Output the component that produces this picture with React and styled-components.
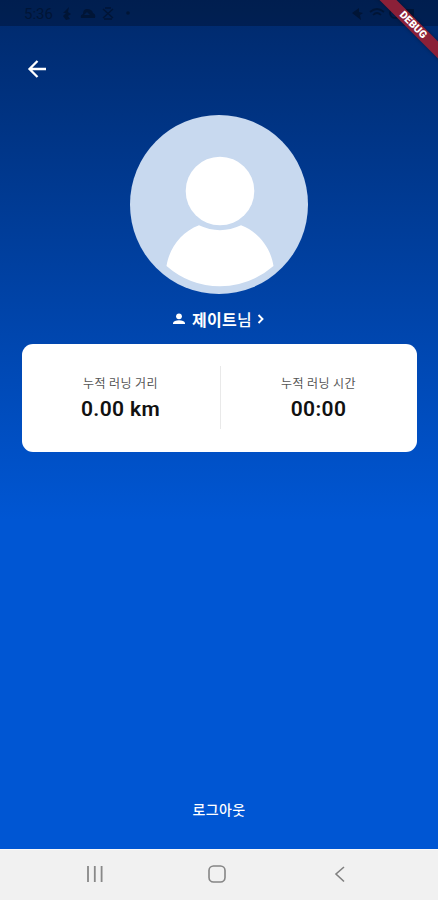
import React from "react";
import styled, { createGlobalStyle } from "styled-components";

const GlobalStyle = createGlobalStyle`
  * { box-sizing: border-box; }
  body {
    margin: 0;
    font-family: Roboto, "Noto Sans CJK KR", sans-serif;
  }
  svg { display: block; }
`;

const Screen = styled.div`
  position: relative;
  display: flex;
  flex-direction: column;
  width: 438px;
  height: 900px;
  overflow: hidden;
  color: #fff;
  background: linear-gradient(#00296b 0, #0056d3 520px);
`;

const StatusBar = styled.div`
  display: flex;
  flex: none;
  justify-content: space-between;
  height: 26px;
  padding: 2px 22px 0 24px;
  background: rgba(0, 0, 0, 0.26);
  color: #001536;
`;

const StatusGroup = styled.div`
  display: flex;
  align-items: center;
  gap: 2px;
`;

const Clock = styled.span`
  width: 31px;
  font-size: 15px;
  line-height: 20px;
`;

const Banner = styled.div`
  position: absolute;
  top: 19px;
  left: 363px;
  width: 100px;
  height: 12px;
  transform: rotate(45deg);
  background: #8b2038;
  box-shadow: 0 0 4px rgba(0, 0, 0, 0.35);
  color: #fff;
  font: 900 10.5px/12px Roboto, sans-serif;
  text-align: center;
`;

const Button = styled.button`
  border: 0;
  padding: 0;
  background: none;
  color: inherit;
`;

const Header = styled.header`
  flex: none;
  height: 89px;
  padding: 32px 0 0 26px;
`;

const Profile = styled.section`
  display: flex;
  flex: none;
  flex-direction: column;
  align-items: center;
`;

const NameButton = styled(Button)`
  display: flex;
  align-items: center;
  height: 24px;
  margin-top: 13px;
`;

const Name = styled.span`
  margin: 0 5px 0 7px;
  font: 500 16px/24px "Noto Sans CJK KR", sans-serif;
  letter-spacing: 0.3px;

  b { font-weight: 700; }
`;

const Card = styled.section`
  display: flex;
  flex: none;
  align-items: center;
  height: 108px;
  margin: 13px 21px 0 22px;
  border-radius: 11px;
  background: #fff;
`;

const Stat = styled.div`
  flex: ${props => props.$grow || 1} 1 0;
  text-align: center;
`;

const StatLabel = styled.div`
  color: #555;
  font: 400 12px/18px "Noto Sans CJK KR", sans-serif;
  letter-spacing: 0.4px;
`;

const StatValue = styled.div`
  margin-top: 3px;
  color: #111;
  font-size: 21px;
  font-weight: 600;
  line-height: 28px;
  letter-spacing: 0.35px;
`;

const Divider = styled.div`
  width: 1px;
  height: 63px;
  margin: 0 -1px 2px 1px;
  background: #e9e9e9;
`;

const Logout = styled(Button)`
  align-self: center;
  margin-top: auto;
  margin-bottom: 29px;
  font: 500 14px/22px "Noto Sans CJK KR", sans-serif;
  letter-spacing: 0.4px;
`;

const NavBar = styled.nav`
  display: flex;
  flex: none;
  align-items: center;
  justify-content: space-between;
  height: 51px;
  padding: 0 87px 2px 83px;
  border-top: 1px solid #fafafa;
  background: #f1f1f1;
`;

const BackIcon = () => (
  <svg width="22" height="22" viewBox="0 0 22 22" fill="none" stroke="#fff" strokeWidth="2.3">
    <path d="M20 11H4M11.5 3 3.5 11l8 8" />
  </svg>
);

const Avatar = () => (
  <svg width="178" height="179" viewBox="0 0 178 179">
    <ellipse cx="89" cy="89.5" rx="89" ry="89.5" fill="#c8d9ef" />
    <circle cx="90" cy="76" r="34.3" fill="#fff" />
    <path
      d="M69 110.3C51 117 39 134 36.5 151Q60 171.3 90 171.3T143.5 151C141 134 129 117 111 110.3Q90 120 69 110.3Z"
      fill="#fff"
    />
  </svg>
);

const StatusIcons = () => (
  <svg width="78" height="16" viewBox="0 0 78 16" fill="currentColor">
    <path d="M12 1 6 7h3l-3 3 3 4 4-1-2-3 3-2-3-2z" />
    <path d="M30 3q-4 0-4 5-3 1-2 4h14q1-4-2-5-1-4-6-4z" />
    <path d="m30 6 3 3h-6z" fill="#001f4e" />
    <path d="m46 3 10 9M56 3 46 12M48 2h6M47 13h8" fill="none" stroke="currentColor" strokeWidth="1.5" />
    <circle cx="71" cy="7" r="1.8" />
  </svg>
);

const SignalIcons = () => (
  <svg width="65" height="16" viewBox="0 0 65 16" fill="currentColor">
    <path d="m1 7 7-5v4l4 1-3 2 1 5z" />
    <path d="M19 6q7-6 14 0M22 9q4-4 8 0" fill="none" stroke="currentColor" strokeWidth="1.7" />
    <circle cx="44" cy="7" r="5" fill="none" stroke="currentColor" strokeWidth="1.7" />
    <path d="M55 3h8v10h-8z" />
  </svg>
);

const App = () => (
  <>
    <GlobalStyle />
    <Screen>
      <Banner>DEBUG</Banner>
      <StatusBar>
        <StatusGroup>
          <Clock>5:36</Clock>
          <StatusIcons />
        </StatusGroup>
        <StatusGroup>
          <SignalIcons />
        </StatusGroup>
      </StatusBar>
      <Header>
        <Button aria-label="back"><BackIcon /></Button>
      </Header>
      <Profile>
        <Avatar />
        <NameButton>
          <svg width="12" height="12" viewBox="0 0 12 12" fill="#fff">
            <circle cx="6" cy="3.3" r="2.9" />
            <path d="M0 11V9.8Q1 7.3 6 7.3t6 2.5V11z" />
          </svg>
          <Name><b>제이트</b>님</Name>
          <svg width="8" height="10" viewBox="0 0 8 10" fill="none" stroke="#fff" strokeWidth="1.9">
            <path d="m1.5 1 4 4-4 4" />
          </svg>
        </NameButton>
      </Profile>
      <Card>
        <Stat>
          <StatLabel>누적 러닝 거리</StatLabel>
          <StatValue>0.00 km</StatValue>
        </Stat>
        <Divider />
        <Stat>
          <StatLabel>누적 러닝 시간</StatLabel>
          <StatValue>00:00</StatValue>
        </Stat>
      </Card>
      <Logout>로그아웃</Logout>
      <NavBar>
        <svg width="22" height="22" viewBox="0 0 22 22" stroke="#888" strokeWidth="1.8">
          <path d="M5 3v16M11.8 3v16M18.6 3v16" />
        </svg>
        <svg width="22" height="22" viewBox="0 0 22 22" fill="none" stroke="#858585" strokeWidth="1.6">
          <rect x="3" y="3" width="16" height="16" rx="4.5" />
        </svg>
        <svg width="22" height="22" viewBox="0 0 22 22" fill="none" stroke="#808080" strokeWidth="1.6">
          <path d="m15 4-8 7 8 7.5" />
        </svg>
      </NavBar>
    </Screen>
  </>
);

export default App;
